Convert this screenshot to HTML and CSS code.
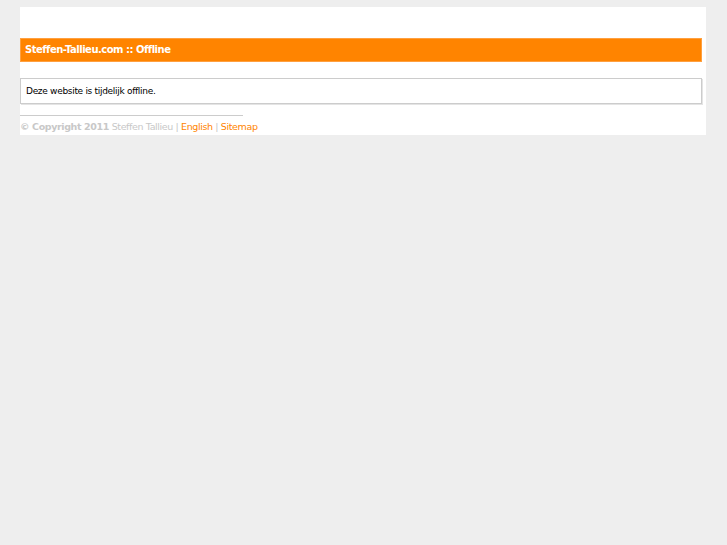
FILE: index.html
```html
<!DOCTYPE html>
<html>
<head>
<meta charset="utf-8">
<title>Steffen-Tallieu.com :: Offline</title>
<link rel="stylesheet" href="styles.css">
</head>
<body>
<div class="page">
  <div class="titlebar">Steffen-Tallieu.com :: Offline</div>
  <div class="content">Deze website is tijdelijk offline.</div>
  <div class="rule"></div>
  <div class="footer"><b>© Copyright 2011</b> Steffen Tallieu | <a href="#">English</a> | <a href="#">Sitemap</a></div>
</div>
</body>
</html>
```
FILE: styles.css
```css
html, body {
  margin: 0;
  padding: 0;
  background: #eeeeee;
}
body {
  font-family: "DejaVu Sans", Verdana, sans-serif;
  font-size: 10px;
}
.page {
  margin: 7px 0 0 20px;
  width: 686px;
  background: #ffffff;
  padding: 31px 0 0 0;
  height: 97px;
  box-sizing: content-box;
}
.titlebar {
  margin-right: 4px;
  height: 22px;
  line-height: 22px;
  background: #ff8400;
  border: 1px solid #ffa040;
  color: #ffffff;
  font-weight: bold;
  padding-left: 4px;
  letter-spacing: -0.5px;
}
.content {
  margin-top: 16px;
  margin-right: 4px;
  height: 24px;
  line-height: 24px;
  border: 1px solid #cccccc;
  box-shadow: 1px 1px 0 #e4e4e4;
  padding-left: 5px;
  color: #000000;
  font-size: 9px;
  letter-spacing: -0.3px;
}
.rule {
  margin-top: 11px;
  width: 223px;
  height: 1px;
  background: #cccccc;
}
.footer {
  margin-top: 5px;
  line-height: 12px;
  color: #c8c8c8;
  font-size: 9.5px;
  letter-spacing: -0.38px;
}
.footer b {
  color: #c8c8c8;
}
.footer a {
  color: #ff8400;
  text-decoration: none;
}
```
